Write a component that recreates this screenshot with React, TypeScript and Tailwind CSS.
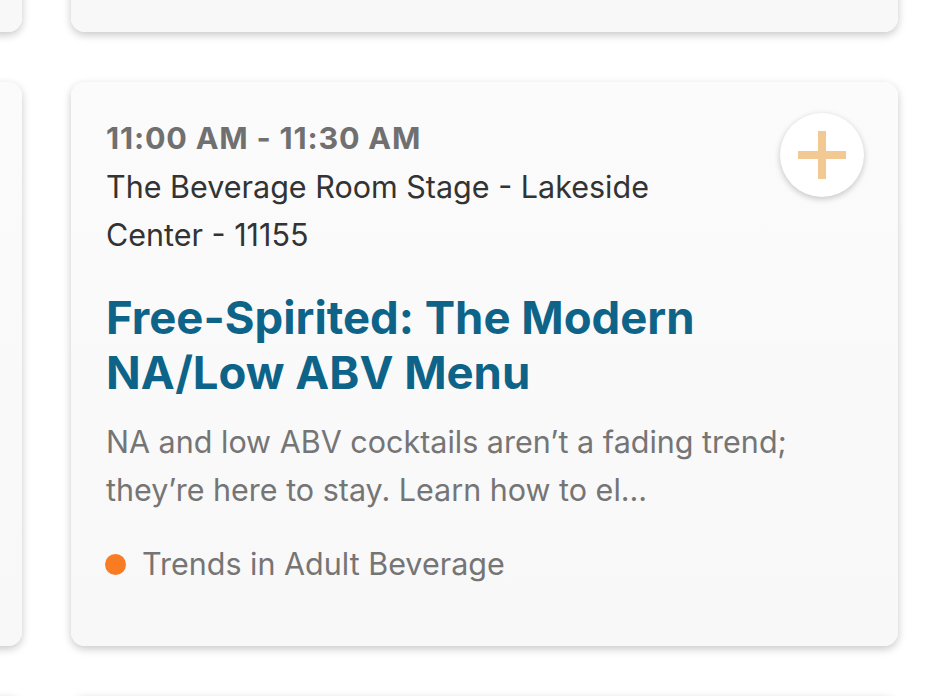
import React from 'react';

// 会议日程卡片：横向滑动的一行，左边露出上一张卡片的边
const session = {
  time: '11:00 AM - 11:30 AM',
  location: 'The Beverage Room Stage - Lakeside Center - 11155',
  title: 'Free-Spirited: The Modern NA/Low ABV Menu',
  summary: 'NA and low ABV cocktails aren’t a fading trend; they’re here to stay. Learn how to el...',
  track: 'Trends in Adult Beverage',
};

const cardBase =
  'w-[827px] h-[564px] shrink-0 rounded-[14px] bg-gradient-to-b from-[#fbfbfb] to-[#f8f8f8] shadow-[0_3px_8px_rgba(0,0,0,0.22)]';

const PlusButton = () => (
  <button className="w-[84px] h-[84px] shrink-0 rounded-full bg-white shadow-[0_2px_6px_rgba(0,0,0,0.22)] flex items-center justify-center">
    <svg width="48" height="48" viewBox="0 0 48 48">
      <path d="M24 0v48M0 24h48" stroke="#f2c993" strokeWidth="8" />
    </svg>
  </button>
);

const SessionCard = () => (
  <div className={`${cardBase} pt-[31px] pl-[35px] pr-[34px]`}>
    <div className="flex items-start gap-[56px]">
      <div className="flex-1">
        <div className="text-[30.5px] leading-[50px] font-bold tracking-[0.8px] text-[#707070]">{session.time}</div>
        <div className="text-[30.5px] leading-[48px] text-[#333333]">{session.location}</div>
      </div>
      <PlusButton />
    </div>
    <h2 className="mt-[31px] pr-[120px] text-[45.5px] leading-[55px] font-bold text-[#0d6488]">
      {session.title}
    </h2>
    <p className="mt-[18px] text-[30.5px] leading-[48px] text-[#757575]">{session.summary}</p>
    <div className="mt-[26px] flex items-center gap-[16px]">
      <span className="w-[21px] h-[21px] -ml-[1px] rounded-full bg-[#f97b22]" />
      <span className="text-[30.5px] leading-[48px] text-[#757575]">{session.track}</span>
    </div>
  </div>
);

const Row = ({ children }: { children?: React.ReactNode }) => (
  <div className="flex gap-[49px] ml-[-805px]">
    <div className={cardBase} />
    {children ?? <div className={cardBase} />}
  </div>
);

export default function App() {
  return (
    <div className="h-screen w-full overflow-hidden bg-white font-['Inter',sans-serif]">
      <div className="flex flex-col gap-[50px] mt-[-532px]">
        <Row />
        <Row>
          <SessionCard />
        </Row>
        <Row />
      </div>
    </div>
  );
}
